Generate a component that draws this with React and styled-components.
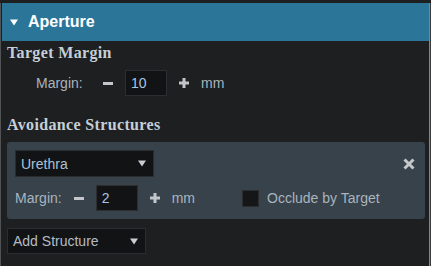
import React from 'react';
import styled, { createGlobalStyle } from 'styled-components';

const GlobalStyle = createGlobalStyle`
  html, body {
    margin: 0;
    padding: 0;
    background: #1e1f21;
  }
  body {
    font-family: "Liberation Sans", Arial, sans-serif;
  }
`;

const Frame = styled.div`
  width: 431px;
  height: 266px;
  box-sizing: border-box;
  padding-top: 3px;
  background: #1e1f21;
  display: flex;
  overflow: hidden;
`;

const Panel = styled.div`
  flex: 1;
  display: flex;
  flex-direction: column;
  border-left: 1px solid #505254;
  border-right: 1px solid #80868a;
  box-shadow: 1px 0 0 #3a3c3e;
  margin-right: 1px;
  padding-left: 1px;
`;

const Header = styled.div`
  height: 38px;
  background: #2b7599;
  display: flex;
  align-items: center;
  padding-left: 8px;
  gap: 10px;
  color: #ffffff;
  font-weight: bold;
  font-size: 16px;

  svg {
    display: block;
  }
`;

const Body = styled.div`
  display: flex;
  flex-direction: column;
  padding: 0 3px 0 5px;
`;

const SectionTitle = styled.h3`
  margin: ${({ $top }) => $top}px 0 0 0;
  font-family: "Liberation Serif", "Times New Roman", serif;
  font-weight: bold;
  font-size: 16px;
  line-height: 18px;
  letter-spacing: 0.35px;
  color: #c5cfd8;
`;

const Row = styled.div`
  display: flex;
  align-items: center;
  gap: 12px;
  height: 26px;
  margin-top: ${({ $top }) => $top || 0}px;
  padding-left: ${({ $indent }) => $indent || 0}px;
  font-size: 14px;
  color: #a9b4be;
`;

const Label = styled.span`
  width: ${({ $width }) => ($width ? `${$width}px` : 'auto')};
`;

const StepButton = styled.span`
  width: 10px;
  height: 10px;
  display: flex;
  align-items: center;
  justify-content: center;
  svg {
    display: block;
  }
`;

const NumberBox = styled.div`
  width: 42px;
  height: 26px;
  box-sizing: border-box;
  background: #121315;
  border: 1px solid #2c2e31;
  padding-left: 5px;
  display: flex;
  align-items: center;
  font-size: 14px;
  color: #a8c6e2;
`;

const Card = styled.div`
  margin-top: 8px;
  width: 418px;
  box-sizing: border-box;
  background: #37424a;
  border-radius: 3px;
  padding: 8px 10px 8px 8px;
  display: flex;
  flex-direction: column;
  gap: 8px;
`;

const CardTop = styled.div`
  display: flex;
  align-items: center;
  justify-content: space-between;
`;

const Select = styled.div`
  width: ${({ $width }) => $width}px;
  height: ${({ $height }) => $height}px;
  box-sizing: border-box;
  background: #121315;
  border: 1px solid #2a2d30;
  display: flex;
  align-items: center;
  justify-content: space-between;
  padding: 0 7px 0 5px;
  margin-top: ${({ $top }) => $top || 0}px;
  font-size: 14px;
  color: ${({ $color }) => $color || '#a9b4be'};

  svg {
    display: block;
  }
`;

const CloseButton = styled.span`
  display: flex;
  svg {
    display: block;
  }
`;

const CheckGroup = styled.label`
  display: flex;
  align-items: center;
  gap: 8px;
  margin-left: 35px;
`;

const CheckBox = styled.span`
  width: 17px;
  height: 17px;
  box-sizing: border-box;
  background: #151617;
  border: 1px solid #2b2d2f;
`;

const Caret = ({ color = '#c9ccd0' }) => (
  <svg width="8" height="7" viewBox="0 0 8 7">
    <path d="M0 0.5 H8 L4 6.5 Z" fill={color} />
  </svg>
);

const Minus = () => (
  <svg width="10" height="3" viewBox="0 0 10 3">
    <rect x="0" y="0" width="10" height="3" fill="#c2c6ca" />
  </svg>
);

const Plus = () => (
  <svg width="10" height="10" viewBox="0 0 10 10">
    <rect x="0" y="3.5" width="10" height="3" fill="#c2c6ca" />
    <rect x="3.5" y="0" width="3" height="10" fill="#c2c6ca" />
  </svg>
);

const Cross = () => (
  <svg width="12" height="12" viewBox="0 0 12 12">
    <path d="M1.5 1.5 L10.5 10.5 M10.5 1.5 L1.5 10.5" stroke="#c4c8cc" strokeWidth="3" />
  </svg>
);

const MarginRow = ({ value, labelWidth, indent, top }) => (
  <Row $indent={indent} $top={top}>
    <Label $width={labelWidth}>Margin:</Label>
    <StepButton><Minus /></StepButton>
    <NumberBox>{value}</NumberBox>
    <StepButton><Plus /></StepButton>
    <span>mm</span>
  </Row>
);

export default function App() {
  return (
    <>
      <GlobalStyle />
      <Frame>
        <Panel>
          <Header>
            <Caret color="#ffffff" />
            <span>Aperture</span>
          </Header>
          <Body>
            <SectionTitle $top={3}>Target Margin</SectionTitle>
            <MarginRow value="10" labelWidth={55} indent={29} top={8} />
            <SectionTitle $top={20}>Avoidance Structures</SectionTitle>
            <Card>
              <CardTop>
                <Select $width={139} $height={27} $color="#a9c2d6">
                  <span>Urethra</span>
                  <Caret />
                </Select>
                <CloseButton><Cross /></CloseButton>
              </CardTop>
              <Row>
                <Label>Margin:</Label>
                <StepButton><Minus /></StepButton>
                <NumberBox>2</NumberBox>
                <StepButton><Plus /></StepButton>
                <span>mm</span>
                <CheckGroup>
                  <CheckBox />
                  <span>Occlude by Target</span>
                </CheckGroup>
              </Row>
            </Card>
            <Select $width={139} $height={26} $top={9} $color="#b5bcc3">
              <span>Add Structure</span>
              <Caret />
            </Select>
          </Body>
        </Panel>
      </Frame>
    </>
  );
}
